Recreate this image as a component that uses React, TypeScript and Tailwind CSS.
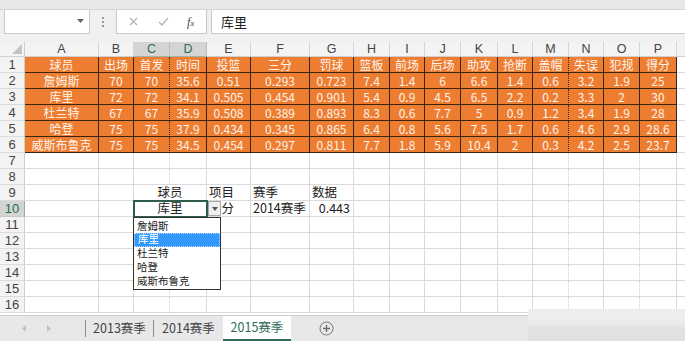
import React from "react";

const FONT = '"Noto Sans CJK SC", "Liberation Sans", sans-serif';

const letters = "ABCDEFGHIJKLMNOP".split("");

const data: string[][] = [
  ["球员", "出场", "首发", "时间", "投篮", "三分", "罚球", "篮板", "前场", "后场", "助攻", "抢断", "盖帽", "失误", "犯规", "得分"],
  ["詹姆斯", "70", "70", "35.6", "0.51", "0.293", "0.723", "7.4", "1.4", "6", "6.6", "1.4", "0.6", "3.2", "1.9", "25"],
  ["库里", "72", "72", "34.1", "0.505", "0.454", "0.901", "5.4", "0.9", "4.5", "6.5", "2.2", "0.2", "3.3", "2", "30"],
  ["杜兰特", "67", "67", "35.9", "0.508", "0.389", "0.893", "8.3", "0.6", "7.7", "5", "0.9", "1.2", "3.4", "1.9", "28"],
  ["哈登", "75", "75", "37.9", "0.434", "0.345", "0.865", "6.4", "0.8", "5.6", "7.5", "1.7", "0.6", "4.6", "2.9", "28.6"],
  ["威斯布鲁克", "75", "75", "34.5", "0.454", "0.297", "0.811", "7.7", "1.8", "5.9", "10.4", "2", "0.3", "4.2", "2.5", "23.7"],
];

const dotted = new Set([2, 12, 14]);

function emptyCell(key: string, c: number) {
  return (
    <div
      key={key}
      className={
        "border-r border-b border-[#dadada] bg-white " +
        (dotted.has(c) ? "[border-right-style:dotted] border-r-[#cdcdcd]" : "")
      }
    />
  );
}

function RowHeader({ n }: { n: number }) {
  const sel = n === 10;
  return (
    <div
      className={
        "flex items-center justify-center border-b border-r text-[13px] leading-none " +
        (sel
          ? "bg-[#d4d4d4] text-[#24704a] border-b-[#c8c8c8] border-r-[#8fb29f]"
          : "bg-[#f3f3f3] text-[#444] border-b-[#dcdcdc] border-r-[#cfcfcf]")
      }
      style={{ fontFamily: '"Liberation Sans", sans-serif' }}
    >
      {n}
    </div>
  );
}

export default function App() {
  const rows: React.ReactNode[] = [];

  rows.push(
    <div key="corner" className="relative border-b border-r border-[#cfcfcf] bg-[#f3f3f3]">
      <svg className="absolute left-[12px] top-[2px]" width="10" height="10" viewBox="0 0 10 10">
        <polygon points="10,0 10,10 0,10" fill="#c3c3c3" />
      </svg>
    </div>
  );
  letters.forEach((l, i) => {
    const sel = i === 2 || i === 3;
    rows.push(
      <div
        key={"h" + l}
        className={
          "flex items-center justify-center border-b border-r text-[12.5px] leading-none " +
          (sel
            ? "bg-[#d4d4d4] text-[#2b6e5a] border-b-[#9bb5a8] border-r-[#bdbdbd]"
            : "bg-[#f3f3f3] text-[#444] border-b-[#cfcfcf] border-r-[#d6d6d6]")
        }
        style={{ fontFamily: '"Liberation Sans", sans-serif' }}
      >
        {l}
      </div>
    );
  });
  rows.push(<div key="hfill" className="border-b border-[#cfcfcf] bg-[#f3f3f3]" />);

  for (let r = 1; r <= 16; r++) {
    rows.push(<RowHeader key={"rh" + r} n={r} />);
    if (r <= 6) {
      data[r - 1].forEach((v, c) => {
        rows.push(
          <div
            key={`c${r}-${c}`}
            className={
              "flex items-center justify-center overflow-hidden whitespace-nowrap border-r border-b border-[#3a2414] bg-[#ed7d31] text-[12px] leading-none text-[#fff4ec] " +
              (c === 2 || c === 12 ? "[border-right-style:dotted]" : "")
            }
          >
            {v}
          </div>
        );
      });
    } else if (r === 9 || r === 10) {
      const vals = r === 9 ? ["球员", "项目", "赛季", "数据"] : ["库里", "三分", "2014赛季", "0.443"];
      rows.push(emptyCell(`c${r}-0`, 0));
      rows.push(emptyCell(`c${r}-1`, 1));
      rows.push(
        <div
          key={`c${r}-cd`}
          className="col-span-2 flex items-center justify-center border-r border-b border-[#dadada] bg-white text-[12.5px] leading-none text-[#222]"
        >
          {vals[0]}
        </div>
      );
      rows.push(
        <div key={`c${r}-e`} className="flex items-center overflow-hidden whitespace-nowrap border-r border-b border-[#dadada] bg-white pl-[2px] text-[12.5px] leading-none text-[#222]">
          {vals[1]}
        </div>
      );
      rows.push(
        <div key={`c${r}-f`} className="flex items-center whitespace-nowrap border-r border-b border-[#dadada] bg-white pl-[2px] text-[12.5px] leading-none text-[#222]">
          {vals[2]}
        </div>
      );
      rows.push(
        <div
          key={`c${r}-g`}
          className={
            "flex items-center whitespace-nowrap border-r border-b border-[#dadada] bg-white text-[12.5px] leading-none text-[#222] " +
            (r === 10 ? "justify-end pr-[3px]" : "pl-[2px]")
          }
        >
          {vals[3]}
        </div>
      );
      for (let c = 7; c < 16; c++) rows.push(emptyCell(`c${r}-${c}`, c));
    } else {
      for (let c = 0; c < 16; c++) rows.push(emptyCell(`c${r}-${c}`, c));
    }
    rows.push(<div key={"f" + r} className="border-b border-[#dadada] bg-white" />);
  }

  const listItems = ["詹姆斯", "库里", "杜兰特", "哈登", "威斯布鲁克"];

  return (
    <div className="relative flex h-[341px] w-[685px] flex-col overflow-hidden bg-[#f0f0f0]" style={{ fontFamily: FONT }}>
      <div className="flex h-[42px] shrink-0 flex-col bg-[#f0f0f0]">
        <div className="h-[10px] border-b border-[#d6d6d6] bg-[#e7e7e7]" />
        <div className="flex h-[24px] items-stretch pl-[4px]">
          <div className="relative w-[86px] border border-t-0 border-[#c9c9c9] bg-white">
            <svg className="absolute right-[5px] top-[9px]" width="7" height="4" viewBox="0 0 7 4">
              <polygon points="0,0 7,0 3.5,4" fill="#666" />
            </svg>
          </div>
          <div className="flex w-[26px] flex-col items-center justify-center gap-[2px]">
            <span className="h-[2px] w-[2px] bg-[#9a9a9a]" />
            <span className="h-[2px] w-[2px] bg-[#9a9a9a]" />
            <span className="h-[2px] w-[2px] bg-[#9a9a9a]" />
          </div>
          <div className="flex w-[91px] items-center border border-t-0 border-[#c9c9c9] bg-white">
            <svg className="ml-[12px]" width="9" height="9" viewBox="0 0 9 9">
              <path d="M1 1 L8 8 M8 1 L1 8" stroke="#b3b3b3" strokeWidth="1.2" />
            </svg>
            <svg className="ml-[20px]" width="11" height="9" viewBox="0 0 11 9">
              <path d="M1 5 L4 8 L10 1" stroke="#b3b3b3" strokeWidth="1.3" fill="none" />
            </svg>
            <span
              className="ml-[18px] text-[12px] italic leading-none text-[#444]"
              style={{ fontFamily: '"Liberation Serif", serif' }}
            >
              f<span className="text-[9px]">x</span>
            </span>
          </div>
          <div className="ml-[4px] flex flex-1 items-center border border-t-0 border-r-0 border-[#c9c9c9] bg-white pl-[9px] text-[13px] leading-none text-[#222]">
            库里
          </div>
        </div>
      </div>

      <div className="relative flex-1 overflow-hidden bg-white">
        <div className="grid grid-cols-[25px_74px_35px_36px_37px_44px_59px_44px_36px_35px_36px_37px_35px_36px_35px_36px_37px_1fr] grid-rows-[15px] auto-rows-[16px]">
          {rows}
        </div>

        <div className="absolute left-[133px] top-[158px] h-[18px] w-[75px] border-2 border-[#2f5d4c]" />
        <div className="absolute left-[208px] top-[159px] flex h-[15px] w-[13px] items-center justify-center border border-[#a8a8a8] bg-[#efefef]">
          <svg width="6" height="4" viewBox="0 0 6 4">
            <polygon points="0,0 6,0 3,4" fill="#555" />
          </svg>
        </div>
        <div className="absolute left-[133px] top-[175px] flex h-[73px] w-[88px] flex-col border border-[#333] bg-white py-px">
          {listItems.map((t, i) => (
            <div
              key={t}
              className={
                "flex h-[14.2px] items-center pl-[3px] text-[10.5px] leading-none " +
                (i === 1 ? "border border-dotted border-[#bcd8ff] bg-[#3399ff] pl-[2px] text-white" : "text-[#222]")
              }
            >
              {t}
            </div>
          ))}
        </div>
      </div>

      <div className="flex h-[26px] shrink-0 items-stretch border-t border-[#cfcfcf] bg-[#e8e8e8] text-[12.5px] leading-none">
        <div className="flex w-[85px] items-center">
          <svg className="ml-[22px]" width="4" height="7" viewBox="0 0 4 7">
            <polygon points="4,0 4,7 0,3.5" fill="#c2c2c2" />
          </svg>
          <svg className="ml-[21px]" width="4" height="7" viewBox="0 0 4 7">
            <polygon points="0,0 0,7 4,3.5" fill="#c2c2c2" />
          </svg>
        </div>
        <div className="my-[4px] w-px bg-[#8f8f8f]" />
        <div className="flex w-[67px] items-center justify-center text-[#444]">2013赛季</div>
        <div className="my-[4px] w-px bg-[#8f8f8f]" />
        <div className="flex w-[69px] items-center justify-center text-[#444]">2014赛季</div>
        <div className="flex w-[68px] items-center justify-center border-b-2 border-[#2f6b5a] bg-white text-[#2f6b5a]">
          2015赛季
        </div>
        <div className="flex w-[70px] items-center justify-center">
          <svg width="15" height="15" viewBox="0 0 15 15">
            <circle cx="7.5" cy="7.5" r="6.5" fill="none" stroke="#7a7a7a" strokeWidth="1" />
            <path d="M7.5 4 V11 M4 7.5 H11" stroke="#6a6a6a" strokeWidth="1.3" />
          </svg>
        </div>
      </div>

      <div className="absolute bottom-0 left-[528px] right-0 top-[309px] bg-[linear-gradient(to_bottom,#eeeeee_0%,#ececec_45%,#e2e2e2_58%,#e0e0e0_100%)]" />
    </div>
  );
}
